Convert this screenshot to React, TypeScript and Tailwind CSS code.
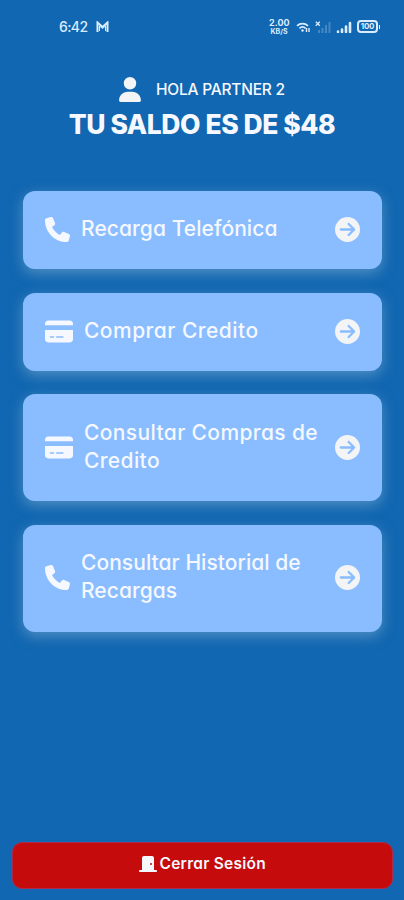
import clsx from 'clsx';
import { FaCircleArrowRight, FaCreditCard, FaDoorClosed, FaPhone, FaUser } from 'react-icons/fa6';

const options = [
    {
        icon: <FaPhone className="w-[25px] h-[25px]" />,
        title: 'Recarga Telefónica',
        box: 'h-[78px] pb-[2px]',
        tracking: 'tracking-[0.07px]',
    },
    {
        icon: <FaCreditCard className="w-[28px] h-[25px]" />,
        title: 'Comprar Credito',
        box: 'h-[78px] pb-px',
        tracking: 'tracking-[0.47px]',
    },
    {
        icon: <FaCreditCard className="w-[28px] h-[25px]" />,
        title: 'Consultar Compras de Credito',
        box: 'h-[107px] pb-px',
        tracking: 'tracking-[0.37px]',
    },
    {
        icon: <FaPhone className="w-[25px] h-[25px]" />,
        title: 'Consultar Historial de Recargas',
        box: 'h-[107px] pb-[2px]',
        tracking: 'tracking-[0.05px]',
    },
];

function StatusBar() {
    return (
        <div className="h-[53px] flex items-center justify-between pl-[59px] pr-[24px] text-[#dcecff]">
            <div className="flex items-center gap-[9px]">
                <span className="w-[28px] text-sm leading-4 font-medium tracking-[-0.6px]">6:42</span>
                <svg className="w-[13px] h-[11px]" viewBox="0 0 13 11" fill="none" stroke="currentColor" strokeWidth="2">
                    <path d="M1.5 11V1.5L6.5 6l5-4.5V11" />
                    <path d="M3.5 10V5l3 2.5 3-2.5v5" strokeWidth="1" />
                </svg>
            </div>
            <div className="flex items-center">
                <div className="w-5 text-center font-bold">
                    <div className="text-[9px] leading-[9px]">2.00</div>
                    <div className="text-[7px] leading-[9px]">KB/S</div>
                </div>
                <svg className="w-[15px] h-3 ml-[7px]" viewBox="0 0 15 12" fill="none" stroke="currentColor" strokeWidth="1.8">
                    <path d="M1 4.8c3.2-3 7.8-3 11 0M3.4 7.3c1.9-1.7 4.3-1.7 6.2 0" />
                    <circle cx="6.5" cy="9.5" r="1.2" fill="currentColor" stroke="none" />
                    <path d="M10.5 7v4M13 11V7" strokeWidth="1.4" />
                </svg>
                <svg className="w-4 h-3 ml-[4px]" viewBox="0 0 16 12" fill="none" stroke="currentColor">
                    <path d="M.8.8l4 4M4.8.8l-4 4" strokeWidth="1.3" />
                    <path d="M4 12V9M7.5 12V7M11 12V4M14.5 12V1" strokeWidth="2" opacity=".25" />
                </svg>
                <svg className="w-4 h-3 ml-[5px]" viewBox="0 0 16 12" fill="none" stroke="currentColor" strokeWidth="2.6" strokeLinecap="round">
                    <path d="M2 11v-.5M6 11V8.5M10 11V5.5M14 11V2" />
                </svg>
                <div className="ml-[5px] flex items-center gap-px">
                    <div className="w-[21px] h-[13px] rounded-[4px] border-2 border-current text-center text-[8px] leading-[9px] font-bold tracking-[-0.3px]">
                        100
                    </div>
                    <div className="w-px h-1 bg-current" />
                </div>
            </div>
        </div>
    );
}

export default function App() {
    return (
        <main className="w-full h-[900px] flex flex-col bg-[#1167b1] text-[#f5f8fe] font-['Inter','Noto_Sans',sans-serif] [font-feature-settings:'cv11'] whitespace-nowrap overflow-hidden">
            <StatusBar />

            <header className="pt-6 flex flex-col items-center">
                <div className="flex items-center gap-[15px] h-[25px]">
                    <FaUser className="w-[22px] h-[25px] text-[#f3f4f6]" />
                    <p className="w-[129px] text-[15.5px] leading-[25px] font-medium tracking-[-0.22px]">HOLA PARTNER 2</p>
                </div>
                <h1 className="mt-1 text-[26.5px] leading-9 font-extrabold tracking-[-0.45px]">TU SALDO ES DE $48</h1>
            </header>

            <section className="mt-[49px] pl-[23px] pr-[22px] flex flex-col gap-[23.5px]">
                {options.map((item, idx) => (
                    <button
                        key={idx}
                        className={clsx(
                            'w-full flex items-center gap-[11px] px-[22px] rounded-xl bg-[#8abdff] shadow-[0_4px_14px_rgba(150,185,215,0.5)]',
                            item.box
                        )}
                    >
                        {item.icon}
                        <span className={clsx('w-[238px] mr-auto text-left text-[21px] leading-[28.5px] font-medium whitespace-normal', item.tracking)}>
                            {item.title}
                        </span>
                        <FaCircleArrowRight className="w-[25px] h-[25px] shrink-0 text-[#f3f4f6]" />
                    </button>
                ))}
            </section>

            <footer className="mt-auto pl-3 pr-[11px] pb-[11px]">
                <button className="w-full h-[47px] pb-[4px] flex items-center justify-center gap-[3px] rounded-[10px] border border-[#a92c4c] bg-[#c50b0b]">
                    <FaDoorClosed className="w-[18px] h-4" />
                    <span className="w-[107px] text-left text-[15.5px] leading-5 font-semibold tracking-[0.25px]">Cerrar Sesión</span>
                </button>
            </footer>
        </main>
    );
}
